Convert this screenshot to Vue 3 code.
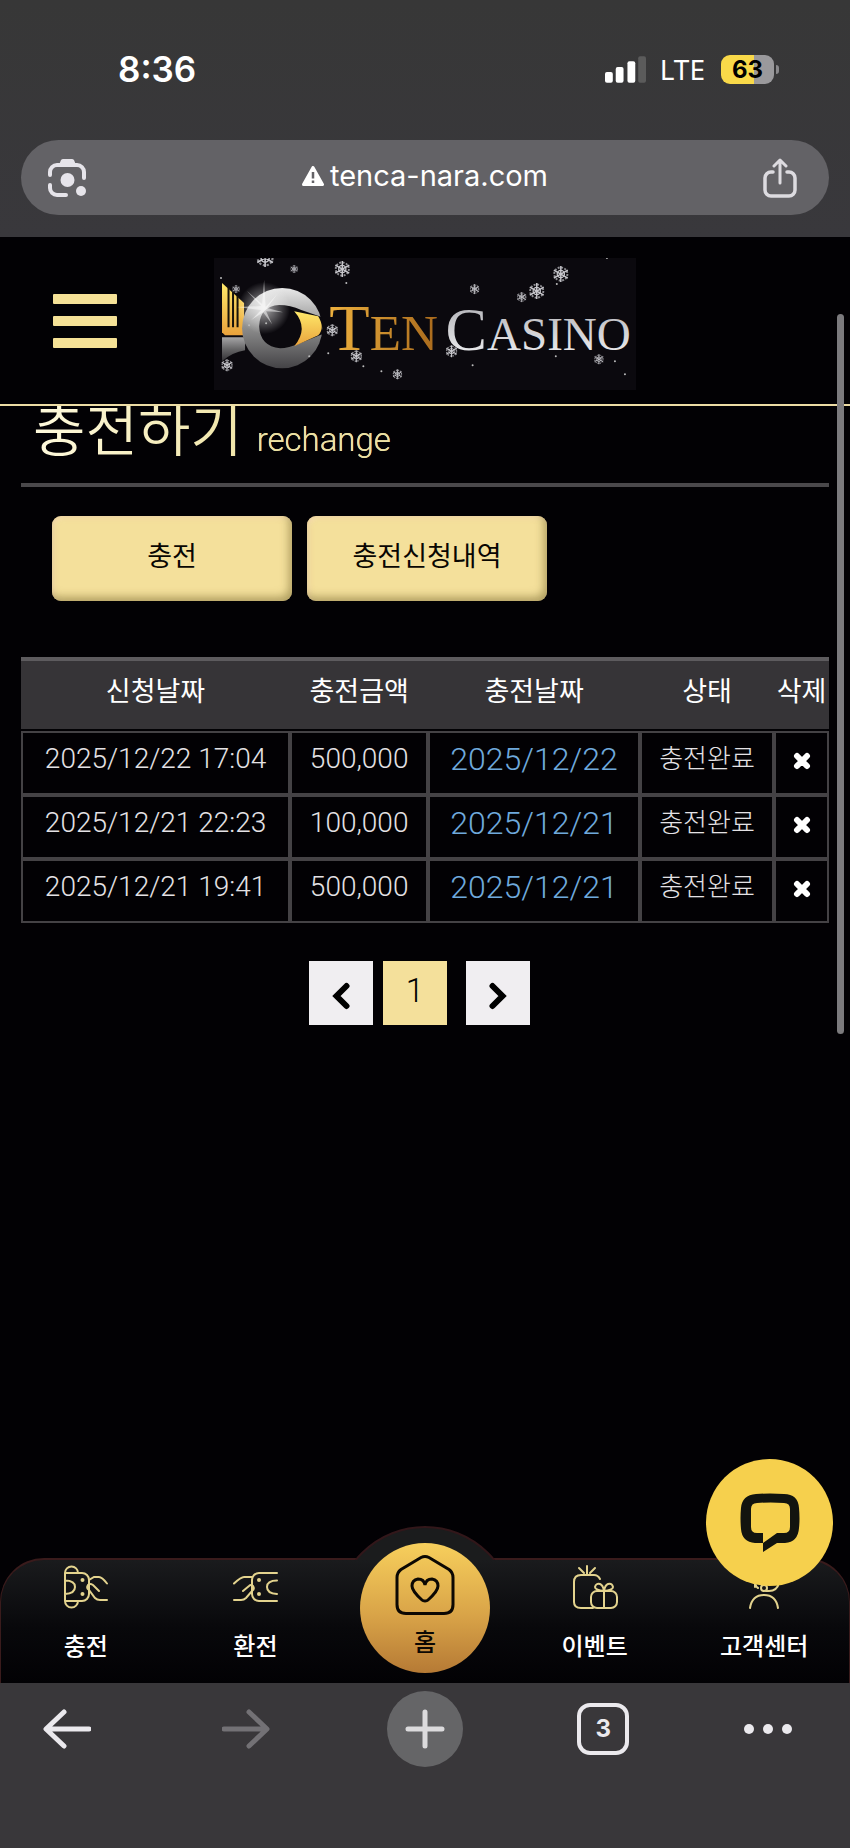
<template>
  <div class="phone">
    <header class="browser-top">
      <div class="status-bar">
        <span class="status-time">8:36</span>
        <div class="status-right">
          <svg class="signal" viewBox="0 0 42 27" aria-hidden="true">
            <rect x="0" y="16" width="8" height="11" rx="2" />
            <rect x="11" y="11" width="8" height="16" rx="2" />
            <rect x="23" y="5" width="8" height="22" rx="2" />
            <rect class="signal-off" x="34" y="0" width="8" height="27" rx="2" />
          </svg>
          <span class="network">LTE</span>
          <span class="battery">63</span>
        </div>
      </div>

      <div class="address-bar">
        <button class="icon-btn" type="button" aria-label="렌즈">
          <svg class="icon-lens" viewBox="0 0 40 40" fill="none" stroke="#e6e4ea" stroke-width="4" stroke-linecap="round">
            <path d="M3 17v-3a7 7 0 0 1 7-7h20a7 7 0 0 1 7 7v6" />
            <path d="M3 27v3a7 7 0 0 0 7 7h9" />
            <path d="M12 7l2-5q1-1 2-1h9q1 0 2 1l2 5z" fill="#e6e4ea" stroke="none" />
            <circle cx="20.500" cy="22" r="7" fill="#e6e4ea" stroke="none" />
            <circle cx="34" cy="33" r="5" fill="#e6e4ea" stroke="none" />
          </svg>
        </button>
        <span class="url">
          <svg class="icon-warn" viewBox="0 0 22 20" aria-hidden="true">
            <path d="M11 1.500L20.500 18.500h-19z" fill="#fff" stroke="#fff" stroke-width="3" stroke-linejoin="round" />
            <path d="M11 6v6.500M11 14.500v2.500" stroke="#636266" stroke-width="2.500" />
          </svg>
          tenca-nara.com
        </span>
        <button class="icon-btn" type="button" aria-label="공유">
          <svg class="icon-share" viewBox="0 0 34 40" fill="none" stroke="#dddbe0" stroke-width="4" stroke-linecap="round" stroke-linejoin="round">
            <path d="M10 14H8a6 6 0 0 0-6 6v12a6 6 0 0 0 6 6h18a6 6 0 0 0 6-6V20a6 6 0 0 0-6-6h-2" stroke-width="3.500" />
            <path d="M17 25V3M11 8l6-6 6 6" stroke-width="3" />
          </svg>
        </button>
      </div>
    </header>

    <div class="site">
      <div class="site-header">
        <button class="menu-btn" type="button" aria-label="메뉴">
          <span></span><span></span><span></span>
        </button>
        <a class="logo" href="#" aria-label="Ten Casino">
          <svg viewBox="0 0 422 132">
            <defs>
              <linearGradient id="gold" x1="0" y1="0" x2="0" y2="1">
                <stop offset="0" stop-color="#ffe96a" />
                <stop offset="1" stop-color="#e9a23c" />
              </linearGradient>
              <linearGradient id="silver" x1="0" y1="0" x2="0" y2="1">
                <stop offset="0" stop-color="#e8e8e8" />
                <stop offset="0.500" stop-color="#8c8c8c" />
                <stop offset="1" stop-color="#444346" />
              </linearGradient>
              <linearGradient id="word-gold" x1="0" y1="0" x2="1" y2="0">
                <stop offset="0" stop-color="#eeb13e" />
                <stop offset="1" stop-color="#a8691c" />
              </linearGradient>
              <linearGradient id="word-silver" x1="0" y1="0" x2="0" y2="1">
                <stop offset="0" stop-color="#a9a9ae" />
                <stop offset="1" stop-color="#f5f5f7" />
              </linearGradient>
              <radialGradient id="shine">
                <stop offset="0" stop-color="#fff" />
                <stop offset="0.350" stop-color="#fff" stop-opacity="0.600" />
                <stop offset="1" stop-color="#fff" stop-opacity="0" />
              </radialGradient>
            </defs>
            <rect width="422" height="132" fill="#0b090e" />
            <path d="M8 25l22 20v32H11l-3-3z" fill="url(#gold)" />
            <path d="M14.500 30v39M19 34v35M23.500 38v31" stroke="#17130a" stroke-width="2" />
            <path d="M8 79h23v13q-13 2-23 11z" fill="url(#silver)" opacity="0.700" />
            <circle cx="68" cy="70" r="40" fill="url(#silver)" />
            <path d="M45 68q1-20 20-21 11 0 22 5l21 7v17l-22 9q-12 5-20 5-20-2-21-22z" fill="#0b090e" />
            <path d="M80 53l24 5q7 12 0 19l-24 11q15-18 0-35z" fill="url(#gold)" />
            <circle cx="50" cy="50" r="26" fill="url(#shine)" opacity="0.700" />
            <path d="M50 22l1.500 27L64 35 53 50l16 4-17-1 6 13-9-12-12 8 10-10-24-3 24-1-14-15 15 13z" fill="#fff" opacity="0.500" />
            <text class="logo-ten" x="115" y="92" fill="url(#word-gold)">T<tspan class="logo-en">EN</tspan></text>
            <text class="logo-c" x="231" y="92" fill="url(#word-silver)">C<tspan class="logo-asino">ASINO</tspan></text>
            <g
              v-for="(f, i) in flakes"
              :key="i"
              :transform="`translate(${f[0]} ${f[1]}) scale(${f[2]})`"
              fill="none"
              stroke="#e9e9ee"
              opacity="0.850"
            >
              <path d="M0-1V1M-.87-.5L.87.5M-.87.5L.87-.5" stroke-width="0.180" />
              <circle r="0.450" stroke-width="0.160" />
              <circle r="0.820" stroke-width="0.240" stroke-dasharray="0.250 0.180" opacity="0.700" />
            </g>
            <circle v-for="(d, i) in dots" :key="'d' + i" :cx="d[0]" :cy="d[1]" r="1" fill="#bbb" />
          </svg>
        </a>
      </div>

      <main class="content">
        <h1 class="page-title">충전하기 <small>rechange</small></h1>

        <div class="tabs">
          <button class="tab-btn" type="button">충전</button>
          <button class="tab-btn" type="button">충전신청내역</button>
        </div>

        <table class="history">
          <colgroup>
            <col class="col-request" />
            <col class="col-amount" />
            <col class="col-date" />
            <col class="col-state" />
            <col />
          </colgroup>
          <thead>
            <tr>
              <th v-for="h in headers" :key="h" scope="col">{{ h }}</th>
            </tr>
          </thead>
          <tbody>
            <tr v-for="row in rows" :key="row.requested">
              <td>{{ row.requested }}</td>
              <td>{{ row.amount }}</td>
              <td class="charged">{{ row.charged }}</td>
              <td class="state">{{ row.state }}</td>
              <td>
                <button class="delete-btn" type="button" aria-label="삭제">
                  <svg viewBox="0 0 18 18"><path d="M4 4l10 10M14 4L4 14" stroke="#fff" stroke-width="6" stroke-linecap="round" /></svg>
                </button>
              </td>
            </tr>
          </tbody>
        </table>

        <nav class="pager" aria-label="페이지">
          <button class="page-btn" type="button" aria-label="이전">
            <svg viewBox="0 0 18 28"><path d="M14.500 4L4.500 14l10 10" /></svg>
          </button>
          <button class="page-btn current" type="button">1</button>
          <button class="page-btn next" type="button" aria-label="다음">
            <svg viewBox="0 0 18 28"><path d="M3.500 4l10 10-10 10" /></svg>
          </button>
        </nav>
      </main>

      <nav class="bottom-nav">
        <div class="bump"></div>
        <a class="nav-item" href="#">
          <svg viewBox="0 0 44 44">
            <path d="M1 8a6.500 6.500 0 0 1 13 0M1 8v28a6.500 6.500 0 0 0 13 0M1 8h17a7 7 0 0 1 7 7v14a7 7 0 0 1-7 7H1M1 15.500q10 0 10 6.500t-10 7" />
            <path d="M25 15l5-3h5q3 0 8 6.500M35 26l-6-6q-3-2-5 0-2 3 1 5l6 8q2 2 5 2h7" />
            <circle class="dot" cx="18.500" cy="15" r="2" /><circle class="dot" cx="18.500" cy="29" r="2" />
          </svg>
          <span>충전</span>
        </a>
        <a class="nav-item" href="#">
          <svg viewBox="0 0 44 44">
            <path d="M44 8H26a7 7 0 0 0-7 7v14a7 7 0 0 0 7 7h18M44 15.500q-10 0-10 6.500t10 7" />
            <path d="M19 12h-8q-3 0-10 6.500M10 26l6-5q2-2 4 0 2 3-1 5l-6 7q-2 2-5 2H1" />
            <circle class="dot" cx="26" cy="15" r="2" /><circle class="dot" cx="26" cy="29" r="2" />
          </svg>
          <span>환전</span>
        </a>
        <a class="nav-item home" href="#">
          <span class="home-circle">
            <svg viewBox="0 0 60 60">
              <path d="M26 2.500q4-2 8 0l20 12q4 3 4 8v27q0 9-9 9H11q-9 0-9-9v-27q0-5 4-8z" />
              <path d="M30 46q-2 0-3-1-10-9-10-14 0-6 6-7 6 0 7 6 1-6 7-6 6 1 6 7 0 5-10 14-1 1-3 1z" />
            </svg>
            <span>홈</span>
          </span>
        </a>
        <a class="nav-item" href="#">
          <svg viewBox="0 0 44 44">
            <path d="M27 14q-2-4-6-4H8q-7 0-7 7v20q0 6 7 6h12M14 9V1M11 8L6 3M17 8l5-5" />
            <rect x="18" y="26" width="26" height="17" rx="6" />
            <path d="M31 26v17M31 26q-9-1-9-4 1-4 5-3 3 1 4 7 1-6 4-7 4-1 5 3 0 3-9 4" />
          </svg>
          <span>이벤트</span>
        </a>
        <a class="nav-item" href="#">
          <svg viewBox="0 0 44 44">
            <path d="M8 43q2-13 14-13t14 13M13 22V12q0-9 10-9t14 9v6q-2 8-10 8h-3M13 18q1 4 3 5" />
            <circle cx="22" cy="23" r="3" />
          </svg>
          <span>고객센터</span>
        </a>
      </nav>

      <button class="chat-btn" type="button" aria-label="채팅 상담">
        <svg viewBox="0 0 60 60">
          <path fill-rule="evenodd" d="M16 1Q30 0 44 1q14 0 15 14 1 11 0 20-1 14-14 15h-8L23 59V50h-8Q2 49 1 36q-1-11 0-21Q2 2 16 1zM17 10q-6 0-6 6v18q0 6 6 6h6v10l14-10h7q6 0 6-6V16q0-6-6-6-13-1-27 0z" />
        </svg>
      </button>
      <div class="scrollbar"></div>
    </div>

    <footer class="browser-bottom">
      <button class="tool-btn" type="button" aria-label="뒤로">
        <svg viewBox="0 0 48 40"><path d="M4 20h42M21 3L3 20l18 17" /></svg>
      </button>
      <button class="tool-btn disabled" type="button" aria-label="앞으로" disabled>
        <svg viewBox="0 0 48 40"><path d="M44 20H2M27 3l18 17-18 17" /></svg>
      </button>
      <button class="tool-btn new-tab" type="button" aria-label="새 탭">
        <svg viewBox="0 0 48 40"><path d="M24 3v34M7 20h34" /></svg>
      </button>
      <button class="tool-btn" type="button" aria-label="탭 3개">
        <span class="tab-count">3</span>
      </button>
      <button class="tool-btn more" type="button" aria-label="더보기">
        <span></span><span></span><span></span>
      </button>
    </footer>
  </div>
</template>

<script setup>
const headers = ['신청날짜', '충전금액', '충전날짜', '상태', '삭제']

const rows = [
  { requested: '2025/12/22 17:04', amount: '500,000', charged: '2025/12/22', state: '충전완료' },
  { requested: '2025/12/21 22:23', amount: '100,000', charged: '2025/12/21', state: '충전완료' },
  { requested: '2025/12/21 19:41', amount: '500,000', charged: '2025/12/21', state: '충전완료' }
]

// x, y, radius of the snowflakes on the logo
const flakes = [
  [51, 0, 9], [80, 11, 4], [128, 11, 8], [22, 31, 4], [260, 31, 5],
  [322, 33, 8], [307, 39, 5], [346, 16, 8], [118, 72, 6], [142, 98, 6],
  [237, 93, 6], [183, 116, 5], [384, 101, 5], [13, 107, 6]
]
const dots = [
  [7, 20], [132, 25], [35, 67], [52, 65], [95, 98], [114, 95], [149, 108],
  [167, 113], [258, 107], [341, 98], [342, 26], [400, 103], [410, 116], [392, 0]
]
</script>

<style>
body {
  margin: 0;
  background: #020104;
}
</style>

<style scoped>
.phone {
  display: flex;
  flex-direction: column;
  min-height: 100vh;
  background: #020104;
  color: #fff;
  font-family: Roboto, 'Noto Sans CJK KR', sans-serif;
}

button {
  padding: 0;
  border: none;
  background: none;
  color: inherit;
  font-family: inherit;
  cursor: pointer;
}

a {
  color: inherit;
  text-decoration: none;
}

svg {
  display: block;
}

.browser-top {
  padding: 0 21px 22px;
  background: linear-gradient(#373737, #39383c);
}

.status-bar {
  display: flex;
  justify-content: space-between;
  align-items: center;
  height: 138px;
  padding: 0 55px 2px 97px;
}

.status-time {
  font: 600 35px/40px Inter, sans-serif;
}

.status-right {
  display: flex;
  align-items: center;
}

.signal {
  width: 41px;
  height: 27px;
  margin-right: 14px;
  fill: #fff;
}

.signal-off {
  fill: #5b5b5b;
}

.network {
  margin-right: 16px;
  font: 400 28px/32px 'Noto Sans', sans-serif;
}

.battery {
  position: relative;
  width: 53px;
  border-radius: 9px;
  background: linear-gradient(90deg, #f9d949 62%, #9a999c 62%);
  color: #000;
  font: 700 24px/29px Inter, sans-serif;
  text-align: center;
}

.battery::after {
  content: '';
  position: absolute;
  top: 10px;
  right: -5px;
  width: 3px;
  height: 9px;
  border-radius: 0 3px 3px 0;
  background: #8a898c;
}

.address-bar {
  display: flex;
  justify-content: space-between;
  align-items: center;
  height: 75px;
  padding: 0 32px 0 26px;
  border-radius: 38px;
  background: #636266;
}

.icon-lens {
  width: 40px;
  height: 40px;
}

.icon-share {
  width: 34px;
  height: 40px;
}

.url {
  display: flex;
  align-items: center;
  gap: 6px;
  padding-bottom: 4px;
  font: 400 29px/36px Inter, sans-serif;
}

.icon-warn {
  width: 22px;
  height: 20px;
}

.site {
  position: relative;
  display: flex;
  flex: 1;
  flex-direction: column;
}

.site-header {
  display: grid;
  grid-template-columns: 1fr minmax(0, 423px) 1fr;
  align-items: center;
  padding: 21px 0 14px;
  border-bottom: 2px solid #ecdca4;
}

.menu-btn {
  display: flex;
  flex-direction: column;
  justify-self: start;
  gap: 12px;
  width: 64px;
  margin-left: 53px;
  padding-bottom: 6px;
}

.menu-btn span {
  height: 10px;
  border-radius: 1px;
  background: #f5e196;
}

.logo-ten {
  font: 400 66px 'Liberation Serif', serif;
}

.logo-en {
  font-size: 51px;
}

.logo-c {
  font: 400 62px 'Liberation Serif', serif;
}

.logo-asino {
  font-size: 47px;
}

.content {
  flex: 1;
  padding: 0 21px;
  overflow: hidden;
}

.page-title {
  margin: -4px 0 0;
  padding: 0 12px 13px;
  border-bottom: 4px solid #4a484b;
  background: linear-gradient(90deg, #fffbe0, #efe3a4 30%) text;
  color: transparent;
  font-size: 57px;
  font-weight: 350;
  line-height: 60px;
}

.page-title small {
  color: #ebe0a2;
  font-size: 33px;
  font-weight: 300;
}

.tabs {
  display: flex;
  gap: 15px;
  padding: 29px 31px 56px;
}

.tab-btn {
  width: 240px;
  height: 85px;
  padding-bottom: 8px;
  border-radius: 9px;
  background: #f4e09b;
  box-shadow: inset -3px -4px 8px rgba(110, 95, 40, 0.5), inset 2px 2px 5px rgba(255, 225, 190, 0.7);
  color: #080602;
  font-size: 27px;
}

.history {
  width: 100%;
  table-layout: fixed;
  border-collapse: separate;
  border-spacing: 0;
  border-top: 4px solid #5d5b5e;
}

.col-request {
  width: 33.3%;
}

.col-amount {
  width: 17.1%;
}

.col-date {
  width: 26.2%;
}

.col-state {
  width: 16.6%;
}

.history th,
.history td {
  box-sizing: border-box;
  padding: 0 0 8px;
  text-align: center;
  white-space: nowrap;
}

.history th {
  height: 70px;
  padding-bottom: 12px;
  border-bottom: 2px solid #020104;
  background: #363437;
  font-size: 27px;
  font-weight: 400;
}

.history td {
  height: 64px;
  border: 2px solid #444245;
  color: #e4e2e5;
  font-size: 28px;
  font-weight: 300;
  line-height: 32px;
}

.history .charged {
  color: #6fa9dc;
  font-size: 32px;
}

.history .state {
  font-size: 26px;
}

.delete-btn {
  display: block;
  width: 18px;
  margin: 4px auto 0;
}

.pager {
  display: flex;
  justify-content: center;
  gap: 10px;
  padding: 38px 11px 0 0;
}

.page-btn {
  display: flex;
  justify-content: center;
  align-items: center;
  width: 64px;
  height: 64px;
  background: #f0eef1;
  color: #000;
}

.page-btn svg {
  width: 18px;
  height: 28px;
  margin-top: 6px;
  fill: none;
  stroke: #000;
  stroke-width: 6;
  stroke-linecap: round;
}

.page-btn.current {
  padding-bottom: 6px;
  background: #f4e09b;
  font-size: 33px;
  font-weight: 300;
}

.page-btn.next {
  margin-left: 9px;
}

.bottom-nav {
  position: relative;
  display: grid;
  grid-template-columns: repeat(5, 1fr);
  height: 123px;
  border: 1px solid #3a1b1c;
  border-top-width: 2px;
  border-bottom: none;
  border-radius: 44px 44px 0 0;
  background: linear-gradient(#1a1b1d, #08080b 55%, #020104);
}

/* the arc over the home button */
.bump {
  position: absolute;
  bottom: 100%;
  left: 50%;
  width: 140px;
  height: 34px;
  margin-left: -70px;
  overflow: hidden;
}

.bump::before {
  content: '';
  position: absolute;
  top: 0;
  left: 50%;
  box-sizing: border-box;
  width: 180px;
  height: 180px;
  margin-left: -90px;
  border: 2px solid #32171a;
  border-radius: 50%;
  background: #1b1c1d;
}

.nav-item {
  display: flex;
  flex-direction: column;
  align-items: center;
  gap: 19px;
  padding-top: 5px;
  font-family: 'Noto Sans CJK KR', sans-serif;
  font-size: 24px;
  font-weight: 500;
  line-height: 34px;
}

.nav-item svg {
  width: 44px;
  height: 44px;
  overflow: visible;
  fill: none;
  stroke: #e3d38e;
  stroke-width: 2;
  stroke-linecap: round;
}

.nav-item .dot {
  fill: #e3d38e;
  stroke: none;
}

.nav-item.home {
  position: relative;
}

.home-circle {
  position: absolute;
  top: -17px;
  display: flex;
  flex-direction: column;
  align-items: center;
  gap: 9px;
  box-sizing: border-box;
  width: 130px;
  height: 130px;
  padding-top: 12px;
  border-radius: 50%;
  background: linear-gradient(#f7cf5c, #d9a448 55%, #b67a35);
  color: #0c0803;
}

.nav-item.home svg {
  width: 60px;
  height: 60px;
  stroke: #0c0803;
  stroke-width: 3;
}

.chat-btn {
  position: absolute;
  right: 17px;
  bottom: 97px;
  display: flex;
  justify-content: center;
  align-items: center;
  width: 127px;
  height: 127px;
  border-radius: 50%;
  background: #f6d04d;
}

.chat-btn svg {
  width: 60px;
  height: 60px;
  fill: #12140f;
}

.scrollbar {
  position: absolute;
  top: 77px;
  right: 6px;
  width: 7px;
  height: 720px;
  border-radius: 4px;
  background: #7b7a7d;
}

.browser-bottom {
  display: flex;
  justify-content: space-between;
  padding: 8px 30px 81px 29px;
  background: #39373a;
}

.tool-btn {
  display: flex;
  justify-content: center;
  align-items: center;
  width: 76px;
  height: 76px;
  color: #ebe9ed;
}

.tool-btn svg {
  width: 48px;
  height: 40px;
  fill: none;
  stroke: currentColor;
  stroke-width: 5;
  stroke-linecap: round;
  stroke-linejoin: round;
}

.tool-btn.disabled {
  color: #737175;
}

.tool-btn.new-tab {
  border-radius: 50%;
  background: #656567;
  color: #dcdbdd;
}

.tab-count {
  box-sizing: border-box;
  width: 52px;
  height: 52px;
  border: 4px solid #ebe9ed;
  border-radius: 13px;
  font: 700 24px/44px Inter, sans-serif;
}

.tool-btn.more {
  justify-content: flex-start;
  gap: 9px;
}

.tool-btn.more span {
  width: 10px;
  height: 10px;
  border-radius: 50%;
  background: #ebe9ed;
}
</style>
